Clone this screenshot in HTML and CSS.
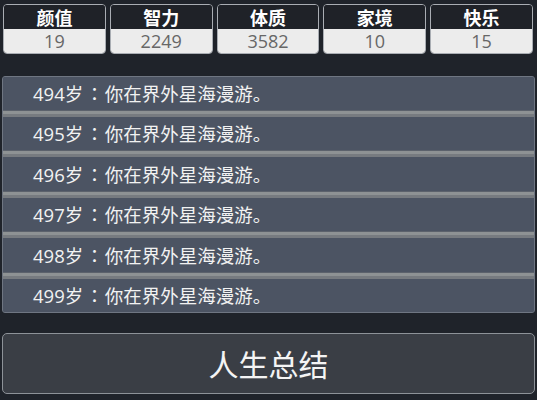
FILE: index.html
```html
<!DOCTYPE html>
<html lang="zh-CN">
<head>
    <meta charset="UTF-8">
    <meta name="viewport" content="width=device-width, initial-scale=1.0">
    <title>人生重开</title>
    <link rel="stylesheet" href="styles.css">
</head>
<body>

    <!-- Attributes -->
    <div class="stats">
        <div class="stat">
            <div class="stat-name">颜值</div>
            <div class="stat-value">19</div>
        </div>
        <div class="stat">
            <div class="stat-name">智力</div>
            <div class="stat-value">2249</div>
        </div>
        <div class="stat">
            <div class="stat-name">体质</div>
            <div class="stat-value">3582</div>
        </div>
        <div class="stat">
            <div class="stat-name">家境</div>
            <div class="stat-value">10</div>
        </div>
        <div class="stat">
            <div class="stat-name">快乐</div>
            <div class="stat-value">15</div>
        </div>
    </div>

    <!-- Life log -->
    <ul class="log">
        <li class="log-row">494岁<span class="colon" lang="zh-TW">：</span>你在界外星海漫游。</li>
        <li class="log-row">495岁<span class="colon" lang="zh-TW">：</span>你在界外星海漫游。</li>
        <li class="log-row">496岁<span class="colon" lang="zh-TW">：</span>你在界外星海漫游。</li>
        <li class="log-row">497岁<span class="colon" lang="zh-TW">：</span>你在界外星海漫游。</li>
        <li class="log-row">498岁<span class="colon" lang="zh-TW">：</span>你在界外星海漫游。</li>
        <li class="log-row">499岁<span class="colon" lang="zh-TW">：</span>你在界外星海漫游。</li>
    </ul>

    <button class="summary-btn">人生总结</button>

</body>
</html>
```

FILE: styles.css
```css
/* Reset */
* {
    margin: 0;
    padding: 0;
    box-sizing: border-box;
}

body {
    font-family: "Noto Sans CJK SC", "Noto Sans", sans-serif;
    background: #1f232a;
    color: white;
    width: 537px;
    height: 400px;
    overflow: hidden;
    padding: 4px 2px 0 2px;
}

/* Stats */
.stats {
    display: flex;
    gap: 4px;
    padding: 0 2px 0 1px;
}

.stat {
    flex: 1;
    text-align: center;
    border: 1px solid #a9adb3;
    border-radius: 4px;
    overflow: hidden;
}

.stat-name {
    height: 24px;
    line-height: 24px;
    font-size: 18px;
    font-weight: bold;
    background: #1f2228;
    color: #fff;
}

.stat-value {
    height: 24px;
    line-height: 25px;
    font-family: "Open Sans", "Noto Sans CJK SC", sans-serif;
    font-size: 18px;
    background: #ececec;
    color: #676767;
}

/* Log */
.log {
    list-style: none;
    margin-top: 22px;
    border: 1px solid #6f7682;
    border-radius: 3px;
    overflow: hidden;
    background: #4c5463;
}

.log-row {
    height: 33px;
    line-height: 33px;
    padding-left: 30px;
    font-family: "Open Sans", "Noto Sans CJK SC", sans-serif;
    font-size: 18.5px;
    color: #f2f2f2;
    background: #4c5463;
}

/* full-width colon sits centred, as in TC glyphs */
.log-row .colon {
    font-family: "Noto Sans CJK TC", sans-serif;
    padding: 0 1px 0 2px;
}

.log-row + .log-row {
    height: 40.4px;
    background: linear-gradient(to bottom,
        #5c626c 0, #5c626c 1px,
        #8e9294 1px, #8e9294 4px,
        #777b80 4px, #777b80 7.4px,
        #4c5463 7.4px);
    padding-top: 7.4px;
}

/* Summary button */
.summary-btn {
    display: block;
    width: 100%;
    height: 61px;
    margin-top: 20px;
    font-family: "Noto Sans CJK SC", "Noto Sans", sans-serif;
    font-size: 30px;
    color: #f4f4f4;
    background: #3a3e45;
    border: 1px solid #8d9298;
    border-radius: 5px;
    cursor: pointer;
}
```
